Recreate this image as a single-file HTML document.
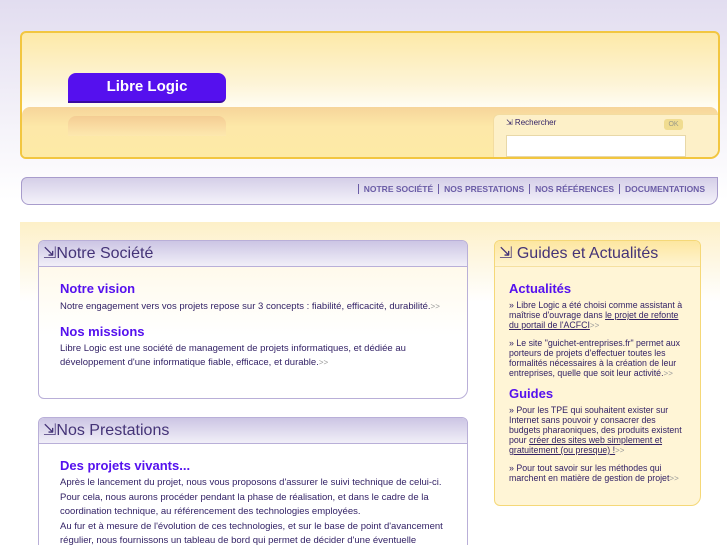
<!DOCTYPE html>
<html style="background:#fff;overflow:hidden"><head><meta charset="utf-8"><style>
body{margin:0;width:727px;height:545px;overflow:hidden;font-family:"Liberation Sans",sans-serif;position:relative}
.a{position:absolute}
#top{left:0;top:0;width:727px;height:220px;background:linear-gradient(#e2ddf0 0,#f4f2f9 120px,#fff 200px)}
#hdr{left:20px;top:31px;width:696px;height:124px;border:2px solid #f2c640;border-radius:6px 6px 10px 6px;background:linear-gradient(#fde9a8,#fdf4d6 50px,#fffdf4 75px);overflow:hidden}
#band{left:0;top:74px;width:696px;height:50px;background:linear-gradient(#f6d49a,#fde8a8 20px,#fdeaa6);border-radius:8px 8px 0 0}
#logo{left:46px;top:40px;width:158px;height:28px;background:#5510ee;border-radius:8px 8px 6px 0;border-bottom:2px solid #3a0aa0;color:#fff;font-weight:bold;font-size:15px;text-align:center;line-height:27px}
#srch{left:471px;top:81px;width:226px;height:50px;background:#fdf0c8;border-radius:6px 0 0 0;border:1px solid #f3dca0}
#nav{left:21px;top:177px;width:695px;height:26px;border:1px solid #a89ccc;border-radius:6px 0 10px 8px;background:linear-gradient(#d5cfe8,#f4f2fa);font-size:8.5px;font-weight:bold;color:#6a5ca6;text-align:right;line-height:22px}
#nav span{border-left:1px solid #6a5ca6;padding:0 5px 0 5px}
#cbg{left:20px;top:222px;width:700px;height:323px;background:linear-gradient(#fdf0c8,#fff 80px)}
.box{border:1px solid #b9afd8;border-radius:6px 6px 10px 6px;background:#fff;overflow:hidden}
.bh{height:25px;background:linear-gradient(#ccc5e4,#f1eff8);border-bottom:1px solid #b9afd8;font-size:16px;color:#443377;line-height:26px;padding-left:4px}
h3{margin:0;font-size:13px;color:#5511ee}
p{margin:0;font-size:9.5px;color:#332266;line-height:14.5px}
.g{color:#999;font-size:8px}
#r p{font-size:8.8px;line-height:10px}
#r u{text-decoration:underline}
</style></head><body>
<div id="top" class="a"></div>
<div id="hdr" class="a">
 <div id="band" class="a"></div>
 <div id="logo" class="a">Libre Logic</div>
 <div class="a" style="left:46px;top:83px;width:158px;height:20px;background:linear-gradient(#f3c890,#fde8b0);border-radius:8px 8px 0 0;opacity:.8"></div>
 <div id="srch" class="a">
  <div class="a" style="left:12px;top:3px;font-size:8px;color:#332266">⇲ Rechercher</div>
  <div class="a" style="left:170px;top:4px;width:19px;height:11px;background:#f0dc90;border-radius:3px;font-size:7px;color:#998;text-align:center;line-height:11px">OK</div>
  <div class="a" style="left:12px;top:20px;width:178px;height:20px;background:#fff;border:1px solid #e8d8a8"></div>
 </div>
</div>
<div id="nav" class="a"><span>NOTRE SOCIÉTÉ</span><span>NOS PRESTATIONS</span><span>NOS RÉFÉRENCES</span><span style="padding-right:12px">DOCUMENTATIONS</span></div>
<div id="cbg" class="a"></div>
<div class="a box" style="left:38px;top:240px;width:428px;height:157px;background:linear-gradient(#fff8e4,#fff 60%)">
 <div class="bh">⇲Notre Société</div>
 <div style="padding:14px 20px 0 21px">
  <h3>Notre vision</h3>
  <p style="margin-top:4px">Notre engagement vers vos projets repose sur 3 concepts : fiabilité, efficacité, durabilité.<span class="g">&gt;&gt;</span></p>
  <h3 style="margin-top:9px">Nos missions</h3>
  <p style="margin-top:3px">Libre Logic est une société de management de projets informatiques, et dédiée au développement d'une informatique fiable, efficace, et durable.<span class="g">&gt;&gt;</span></p>
 </div>
</div>
<div class="a box" style="left:38px;top:417px;width:428px;height:140px">
 <div class="bh">⇲Nos Prestations</div>
 <div style="padding:14px 20px 0 21px">
  <h3>Des projets vivants...</h3>
  <p style="margin-top:3px">Après le lancement du projet, nous vous proposons d'assurer le suivi technique de celui-ci. Pour cela, nous aurons procéder pendant la phase de réalisation, et dans le cadre de la coordination technique, au référencement des technologies employées.<br>Au fur et à mesure de l'évolution de ces technologies, et sur le base de point d'avancement régulier, nous fournissons un tableau de bord qui permet de décider d'une éventuelle</p>
 </div>
</div>
<div id="r" class="a box" style="left:494px;top:240px;width:205px;height:264px;background:#fff5d6;border-color:#f5d878">
 <div class="bh" style="background:linear-gradient(#fde6a0,#fff4d0);border-bottom-color:#f5e0a0">⇲ Guides et Actualités</div>
 <div style="padding:14px 12px 0 14px">
  <h3>Actualités</h3>
  <p style="margin-top:4px">» Libre Logic a été choisi comme assistant à maîtrise d'ouvrage dans <u>le projet de refonte du portail de l'ACFCI</u><span class="g">&gt;&gt;</span></p>
  <p style="margin-top:7px">» Le site "guichet-entreprises.fr" permet aux porteurs de projets d'effectuer toutes les formalités nécessaires à la création de leur entreprises, quelle que soit leur activité.<span class="g">&gt;&gt;</span></p>
  <h3 style="margin-top:7px">Guides</h3>
  <p style="margin-top:4px">» Pour les TPE qui souhaitent exister sur Internet sans pouvoir y consacrer des budgets pharaoniques, des produits existent pour <u>créer des sites web simplement et gratuitement (ou presque) !</u><span class="g">&gt;&gt;</span></p>
  <p style="margin-top:7px">» Pour tout savoir sur les méthodes qui marchent en matière de gestion de projet<span class="g">&gt;&gt;</span></p>
 </div>
</div>
</body></html>
